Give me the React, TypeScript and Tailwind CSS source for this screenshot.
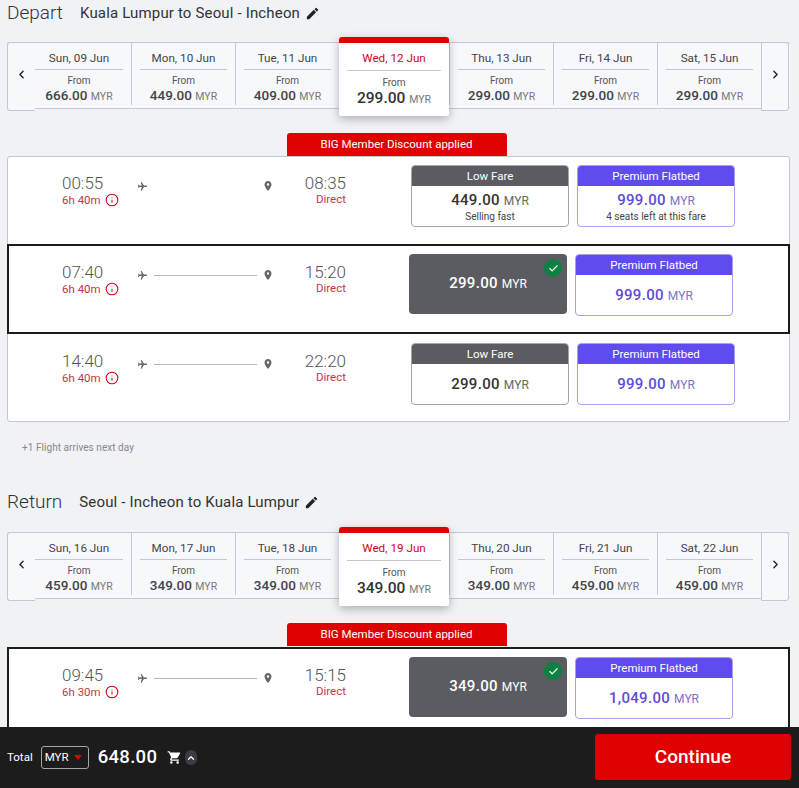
import { Check, ChevronLeft, ChevronRight, ChevronUp, Info } from "lucide-react";
import { MdEdit, MdFlight, MdPlace, MdShoppingCart } from "react-icons/md";

type Day = { label: string; price: string; active?: boolean };

const departDays: Day[] = [
  { label: "Sun, 09 Jun", price: "666.00" },
  { label: "Mon, 10 Jun", price: "449.00" },
  { label: "Tue, 11 Jun", price: "409.00" },
  { label: "Wed, 12 Jun", price: "299.00", active: true },
  { label: "Thu, 13 Jun", price: "299.00" },
  { label: "Fri, 14 Jun", price: "299.00" },
  { label: "Sat, 15 Jun", price: "299.00" },
];

const returnDays: Day[] = [
  { label: "Sun, 16 Jun", price: "459.00" },
  { label: "Mon, 17 Jun", price: "349.00" },
  { label: "Tue, 18 Jun", price: "349.00" },
  { label: "Wed, 19 Jun", price: "349.00", active: true },
  { label: "Thu, 20 Jun", price: "349.00" },
  { label: "Fri, 21 Jun", price: "459.00" },
  { label: "Sat, 22 Jun", price: "459.00" },
];

function Heading({ title, route }: { title: string; route: string }) {
  return (
    <div className="flex items-center h-6 pl-[7px] gap-[17px] text-[#333]">
      <span className="text-[19px] leading-6 font-light">{title}</span>
      <div className="flex items-center gap-[5px]">
        <span className="text-[15px] leading-6 tracking-[0.16px]">{route}</span>
        <MdEdit size={15} className="text-[#222]" />
      </div>
    </div>
  );
}

function DateCell({ day, index }: { day: Day; index: number }) {
  if (day.active) {
    return (
      <div className="relative z-10 -mt-[6px] w-[110px] h-[79px] shrink-0 bg-white rounded-t-[3px] rounded-b-[2px] border-t-[6px] border-[#e00000] shadow-[0_3px_10px_rgba(0,0,0,0.28)] flex flex-col items-center">
        <div className="w-[94px] h-[28px] border-b border-[#c4c7cc] text-center text-[11.7px] leading-[31px] text-[#d0021b]">
          {day.label}
        </div>
        <div className="mt-[6px] text-[10px] leading-[12px] text-[#555]">From</div>
        <div className="text-[15.5px] leading-[19px] font-medium text-[#333]">
          {day.price} <span className="text-[10.5px] font-normal text-[#777]">MYR</span>
        </div>
      </div>
    );
  }
  const wide = index === 0 ? "w-[96px]" : "w-[104px]";
  const pad = index === 0 ? "pl-0 pr-2" : "px-2 border-l border-[#c4c7cc]";
  return (
    <div className={`${wide} ${pad} shrink-0 flex flex-col items-center`}>
      <div className="w-full h-[27px] border-b border-[#c4c7cc] text-center text-[11.7px] leading-[30px] text-[#444]">
        {day.label}
      </div>
      <div className="mt-[5px] text-[10px] leading-[12px] text-[#555]">From</div>
      <div className="text-[13.5px] leading-[16px] font-medium text-[#444]">
        {day.price} <span className="text-[10.5px] font-normal text-[#777]">MYR</span>
      </div>
    </div>
  );
}

function DateStrip({ days }: { days: Day[] }) {
  return (
    <div className="mx-[7px] w-[783px] h-[67px] flex items-start bg-[#f7f8fc] rounded-[3px] border-t border-b border-[#c4c7cc]">
      <div className="-mt-px w-[28px] h-[69px] shrink-0 flex items-center justify-center bg-[#f7f8fc] border border-r-0 border-[#c4c7cc] rounded-l-[3px] pb-[4px]">
        <ChevronLeft size={13} strokeWidth={2.5} className="text-[#222]" />
      </div>
      {days.map((day, i) => (
        <DateCell key={day.label} day={day} index={i} />
      ))}
      <div className="-mt-px w-[28px] h-[69px] shrink-0 flex items-center justify-center bg-[#f7f8fc] border border-[#c4c7cc] rounded-r-[3px] pb-[4px]">
        <ChevronRight size={13} strokeWidth={2.5} className="text-[#222]" />
      </div>
    </div>
  );
}

function DiscountBadge() {
  return (
    <div className="flex justify-center pr-[6px]">
      <div className="w-[220px] h-[23px] bg-[#e00000] rounded-t-[3px] text-center text-[11.5px] leading-[23px] text-white">
        BIG Member Discount applied
      </div>
    </div>
  );
}

function FlightInfo({ dep, arr, dur, line = true, top }: { dep: string; arr: string; dur: string; line?: boolean; top: string }) {
  return (
    <div className={`flex shrink-0 ${top}`}>
      <div className="ml-[54px] w-[58px]">
        <div className="text-[17px] leading-[20px] font-light text-[#555]">{dep}</div>
        <div className="flex items-center gap-[4px] text-[11.5px] leading-[14px] text-[#cc3344]">
          {dur}
          <Info size={14} strokeWidth={1.8} className="shrink-0 text-[#d0021b]" />
        </div>
      </div>
      <div className="ml-[17px] w-[136px] h-[20px] mt-[3px] flex items-center text-[#666]">
        <MdFlight size={11} className="rotate-90 shrink-0" />
        <div className={`ml-[6px] h-px w-[103px] shrink-0 ${line ? "bg-[#b5b7bb]" : ""}`} />
        <MdPlace size={12} className="ml-[5px] shrink-0" />
      </div>
      <div className="ml-[31px] w-[42px] text-right">
        <div className="text-[17px] leading-[20px] font-light text-[#555]">{arr}</div>
        <div className="-mt-px text-[11.5px] leading-[14px] text-[#cc3344]">Direct</div>
      </div>
    </div>
  );
}

function FareCard({ kind, price, note }: { kind: "low" | "premium"; price: string; note?: string }) {
  const premium = kind === "premium";
  return (
    <div className={`w-[158px] h-[62px] shrink-0 rounded-[4px] bg-white border overflow-hidden ${premium ? "border-[#a99fe6]" : "border-[#a5a6a9]"}`}>
      <div className={`h-[20px] text-center text-[11.5px] leading-[20px] text-white ${premium ? "bg-[#5f4bf0]" : "bg-[#5a5c61]"}`}>
        {premium ? "Premium Flatbed" : "Low Fare"}
      </div>
      <div className={`text-center font-medium text-[15px] tracking-[0.3px] ${note ? "mt-[4px] leading-[20px]" : "mt-[10px] leading-[21px]"} ${premium ? "text-[#5f4bd8]" : "text-[#333]"}`}>
        {price} <span className={`text-[12px] font-normal tracking-normal ${premium ? "text-[#7d72c9]" : "text-[#666]"}`}>MYR</span>
      </div>
      {note && <div className="text-center text-[10px] leading-[11px] text-[#444]">{note}</div>}
    </div>
  );
}

function SelectedFare({ price }: { price: string }) {
  return (
    <div className="relative w-[158px] h-[60px] shrink-0 rounded-[4px] bg-[#5a5c61] pt-[19px] text-center text-[15px] tracking-[0.3px] leading-[21px] font-medium text-white">
      {price} <span className="text-[12px] font-normal tracking-normal">MYR</span>
      <span className="absolute top-[5px] right-[5px] w-[18px] h-[18px] rounded-full bg-[#0d8043] flex items-center justify-center">
        <Check size={11} strokeWidth={2.5} className="text-white" />
      </span>
    </div>
  );
}

function SelectedRow({ dep, arr, dur, price, premium }: { dep: string; arr: string; dur: string; price: string; premium: string }) {
  return (
    <div className="h-[90px] border-2 border-[#1c1c1c] bg-white flex">
      <div className="-ml-[1px] flex">
        <FlightInfo dep={dep} arr={arr} dur={dur} top="mt-[16px]" />
      </div>
      <div className="ml-[63px] mt-[8px] flex items-start gap-[8px]">
        <SelectedFare price={price} />
        <FareCard kind="premium" price={premium} />
      </div>
    </div>
  );
}

function PlainRow({ dep, arr, dur, line, low, premium, lowNote, premiumNote, height, top, fareTop }: {
  dep: string; arr: string; dur: string; line?: boolean; low: string; premium: string; lowNote?: string; premiumNote?: string; height: string; top: string; fareTop: string;
}) {
  return (
    <div className={`${height} flex`}>
      <FlightInfo dep={dep} arr={arr} dur={dur} line={line} top={top} />
      <div className={`ml-[65px] flex items-start gap-[8px] ${fareTop}`}>
        <FareCard kind="low" price={low} note={lowNote} />
        <FareCard kind="premium" price={premium} note={premiumNote} />
      </div>
    </div>
  );
}

function Footer() {
  return (
    <div className="fixed bottom-0 left-0 w-full h-[61px] bg-[#1c1c1c] flex items-center pl-[7px] pr-[8px] text-white z-20">
      <span className="text-[11.5px]">Total</span>
      <div className="ml-[8px] w-[48px] h-[23px] border border-[#a5a6a9] rounded-[3px] flex items-center pl-[3px] gap-[5px] text-[11.5px]">
        MYR
        <span className="w-0 h-0 border-x-[4px] border-x-transparent border-t-[5px] border-t-[#e00000]" />
      </div>
      <span className="ml-[9px] text-[18.5px] font-medium tracking-[0.3px]">648.00</span>
      <MdShoppingCart size={15} className="ml-[10px]" />
      <span className="ml-[3px] w-[12px] h-[15px] rounded-full bg-[#3a3d42] flex items-center justify-center">
        <ChevronUp size={10} strokeWidth={3} />
      </span>
      <button className="ml-auto mb-[1px] w-[196px] h-[46px] bg-[#e00000] rounded-[3px] text-[19px] font-medium text-white">
        Continue
      </button>
    </div>
  );
}

export default function App() {
  return (
    <div className="h-[788px] overflow-hidden bg-[#f0f2f6] font-['Roboto',sans-serif] text-left">
      {/* Depart */}
      <div className="pt-px">
        <Heading title="Depart" route="Kuala Lumpur to Seoul - Incheon" />
      </div>
      <div className="mt-[17px]">
        <DateStrip days={departDays} />
      </div>
      <div className="mt-[24px]">
        <DiscountBadge />
      </div>
      <div className="mx-[7px] w-[783px] h-[266px] bg-white rounded-[3px] border border-[#c4c7cc]">
        <PlainRow height="h-[87px]" top="mt-[16px]" fareTop="mt-[8px]" dep="00:55" arr="08:35" dur="6h 40m" line={false} low="449.00" premium="999.00" lowNote="Selling fast" premiumNote="4 seats left at this fare" />
        <div className="-mx-px">
          <SelectedRow dep="07:40" arr="15:20" dur="6h 40m" price="299.00" premium="999.00" />
        </div>
        <PlainRow height="h-[86px]" top="mt-[17px]" fareTop="mt-[9px]" dep="14:40" arr="22:20" dur="6h 40m" low="299.00" premium="999.00" />
      </div>
      <div className="mt-[19px] pl-[22px] text-[10px] leading-[14px] text-[#888] tracking-[0.05px]">+1 Flight arrives next day</div>

      {/* Return */}
      <div className="mt-[35px]">
        <Heading title="Return" route="Seoul - Incheon to Kuala Lumpur" />
      </div>
      <div className="mt-[18px]">
        <DateStrip days={returnDays} />
      </div>
      <div className="mt-[24px]">
        <DiscountBadge />
      </div>
      <div className="mx-[7px] w-[783px] mt-px">
        <SelectedRow dep="09:45" arr="15:15" dur="6h 30m" price="349.00" premium="1,049.00" />
      </div>
      <Footer />
    </div>
  );
}
